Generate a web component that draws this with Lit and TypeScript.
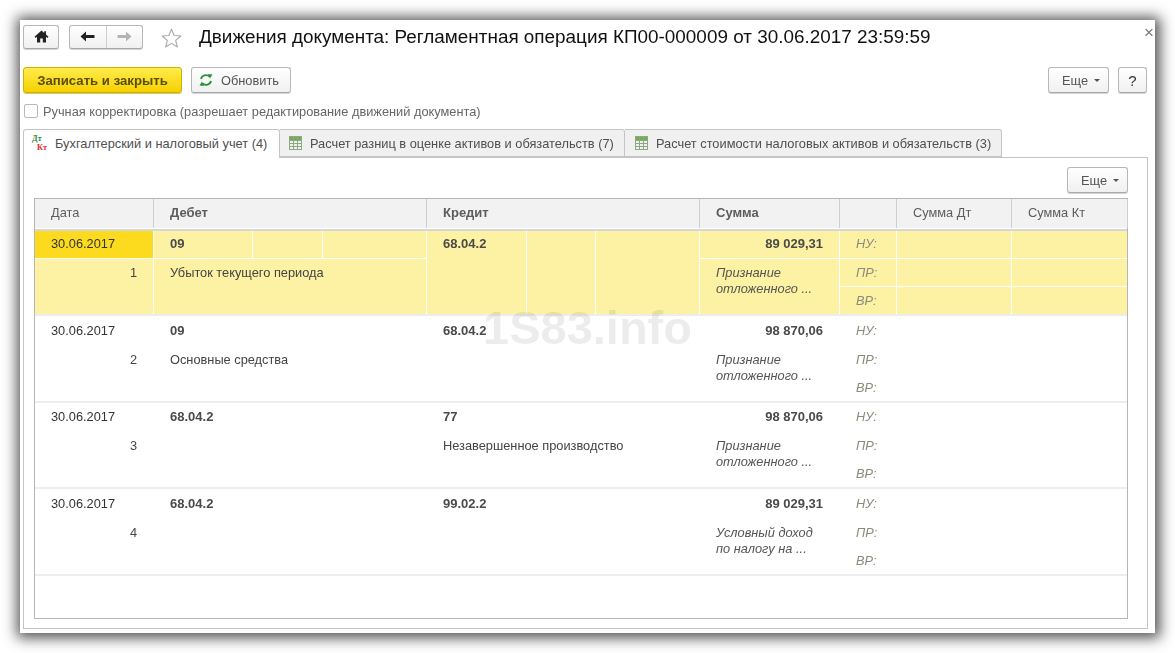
import { LitElement, html, css, svg } from "lit";
import { customElement } from "lit/decorators.js";

interface Row { date: string; n: string; deb: string; debName: string; kr: string; krName: string; sum: string; note: string[]; sel?: boolean; }

const rows: Row[] = [
  { date: "30.06.2017", n: "1", deb: "09", debName: "Убыток текущего периода", kr: "68.04.2", krName: "", sum: "89 029,31", note: ["Признание", "отложенного ..."], sel: true },
  { date: "30.06.2017", n: "2", deb: "09", debName: "Основные средства", kr: "68.04.2", krName: "", sum: "98 870,06", note: ["Признание", "отложенного ..."] },
  { date: "30.06.2017", n: "3", deb: "68.04.2", debName: "", kr: "77", krName: "Незавершенное производство", sum: "98 870,06", note: ["Признание", "отложенного ..."] },
  { date: "30.06.2017", n: "4", deb: "68.04.2", debName: "", kr: "99.02.2", krName: "", sum: "89 029,31", note: ["Условный доход", "по налогу на ..."] },
];

const tableIcon = html`<svg class="ticon" width="13" height="14" viewBox="0 0 13 14">
  <rect x="0.5" y="0.5" width="12" height="13" fill="#eef3e6" stroke="#8fa58c"/>
  <rect x="1" y="1" width="11" height="3" fill="#6fb04a"/>
  ${[4.5, 7.5, 10.5].map((y) => svg`<path d="M1 ${y}H12" stroke="#8fa58c" stroke-width="1"/>`)}
  ${[4.5, 8.5].map((x) => svg`<path d="M${x} 1V13" stroke="#8fa58c" stroke-width="1"/>`)}
</svg>`;

@customElement("app-root")
export class AppRoot extends LitElement {
  static styles = css`
    :host { display: block; width: 1175px; height: 653px; background: #fff; overflow: hidden; font-family: "Liberation Sans", Arial, sans-serif; font-size: 12.8px; color: #444; }
    .stage { padding: 20px; height: 653px; box-sizing: border-box; }
    .win { position: relative; background: #fff; height: 613px; box-sizing: border-box; padding: 4px 7px 4px 3px; box-shadow: 1px 1px 13px 4px rgba(0,0,0,.68); display: flex; flex-direction: column; filter: blur(.3px); }
    .head { display: flex; align-items: center; height: 25px; }
    .btn { box-sizing: border-box; display: flex; align-items: center; justify-content: center; border: 1px solid #b7b7b7; border-bottom-color: #a8a8a8; border-radius: 3px; background: linear-gradient(#fff, #f0f0f0); box-shadow: 0 1px 0 #d4d4d4; }
    .home { width: 36px; height: 24px; }
    .nav { width: 74px; height: 24px; margin-left: 10px; padding: 0; }
    .nav span { flex: 1; height: 100%; display: flex; align-items: center; justify-content: center; }
    .nav span + span { border-left: 1px solid #cfcfcf; }
    .star { margin-left: 18px; display: block; margin-top: 2px; }
    h1 { margin: 0 0 0 17px; padding-top: 1px; font-size: 18.9px; font-weight: 400; color: #111; white-space: nowrap; }
    .close { position: absolute; top: 4px; right: 1px; font-size: 17px; color: #777; line-height: 18px; }
    .bar { display: flex; align-items: center; height: 26px; margin-top: 18px; gap: 9px; padding-right: 1px; }
    .bar .btn { height: 26px; color: #555; }
    .save { width: 159px; background: linear-gradient(#ffec4c, #f6d000); border-color: #cdb000; color: #5a4e00 !important; font-weight: 700; font-size: 13.2px; box-shadow: 0 1px 0 #d9c96a; }
    .refresh { width: 100px; gap: 8px; justify-content: flex-start !important; padding-left: 7px; }
    .spacer { flex: 1; }
    .more { width: 61px; gap: 6px; justify-content: flex-start !important; padding-left: 13px; }
    .caret { width: 0; height: 0; border: 3px solid transparent; border-top-color: #555; border-bottom: 0; margin-top: 1px; }
    .q { width: 29px; font-size: 15px; color: #333 !important; }
    .check { display: flex; align-items: center; height: 16px; margin-top: 10px; gap: 5px; color: #666; }
    .check span + span { padding-top: 1px; }
    .box { width: 14px; height: 14px; box-sizing: border-box; border: 1px solid #b9b9b9; border-radius: 2px; margin-left: 1px; background: #fff; }
    .tabs { display: flex; margin-top: 10px; height: 29px; position: relative; z-index: 1; }
    .tab { box-sizing: border-box; height: 28px; display: flex; align-items: center; border: 1px solid #c4c4c4; border-left: 0; border-bottom: 1px solid #c4c4c4; border-radius: 0 3px 0 0; background: #f0f0f0; padding-left: 9px; gap: 8px; white-space: nowrap; color: #4f4f4f; }
    .tab.on { height: 29px; width: 257px; background: #fff; border-left: 1px solid #c4c4c4; border-bottom: 0; border-radius: 3px 3px 0 0; padding: 0 0 1px 8px; gap: 7px; }
    .t2 { width: 345px; }
    .t3 { width: 377px; padding-left: 10px !important; }
    .ticon { flex: none; }
    .dk { display: flex; flex-direction: column; width: 16px; font-family: "Liberation Serif", serif; font-weight: 700; font-size: 8px; line-height: 8.5px; letter-spacing: .3px; }
    .dk i { font-style: normal; color: #2f8a3a; }
    .dk b { color: #e5262a; margin-left: 5px; }
    .panel { flex: 1; margin-top: -1px; border: 1px solid #c4c4c4; padding: 9px 19px 9px 10px; display: flex; flex-direction: column; min-height: 0; }
    .panel .tools { display: flex; justify-content: flex-end; height: 26px; margin-bottom: 5px; }
    .panel .btn { height: 26px; color: #555; }
    .table { position: relative; flex: 1; border: 1px solid #b5b5b5; min-height: 0; }
    .grid { display: grid; grid-template-columns: 118px 98px 69px 103px 99px 68px 103px 139px 56px 114px 115px; column-gap: 1px; }
    .hdr { background: #fff; border-bottom: 2px solid #d6d6d6; height: 32px; box-sizing: border-box; grid-template-rows: 29px; }
    .hdr div { background: #f2f2f2; height: 29px; padding-left: 16px; line-height: 28px; color: #5c5c5c; box-sizing: border-box; box-shadow: 1px 0 0 #cfcfcf; }
    .hdr .b { font-weight: 700; font-size: 13px; }
    .row { grid-template-rows: 27px 27px 27px; row-gap: 1px; border-bottom: 2px solid #ededed; height: 85.17px; margin-bottom: 1.5px; box-sizing: border-box; }
    .c { padding: 6px 0 0 16px; line-height: 14px; white-space: nowrap; box-sizing: border-box; min-width: 0; }
    .sel .c { background: #fdf1a3; }
    .sel .cur { background: #fcdb1e; }
    .date { grid-column: 1; grid-row: 1; color: #333; }
    .num { grid-column: 1; grid-row: 2 / 4; text-align: right; padding: 7px 16px 0 0; }
    .deb { grid-column: 2; grid-row: 1; font-weight: 700; font-size: 13px; color: #4a4a4a; }
    .d2 { grid-column: 3; grid-row: 1; }
    .d3 { grid-column: 4; grid-row: 1; }
    .dn { grid-column: 2 / 5; grid-row: 2 / 4; padding-top: 7px; }
    .kr { grid-column: 5; grid-row: 1 / 4; font-weight: 700; font-size: 13px; color: #4a4a4a; }
    .k2 { grid-column: 6; grid-row: 1 / 4; }
    .k3 { grid-column: 7; grid-row: 1 / 4; }
    .plain .kr { grid-row: 1; grid-column: 5 / 8; }
    .kn { grid-column: 5 / 8; grid-row: 2 / 4; padding-top: 7px; }
    .sum { grid-column: 8; grid-row: 1; font-weight: 700; font-size: 13px; text-align: right; padding: 6px 16px 0 0; color: #4a4a4a; }
    .note { grid-column: 8; grid-row: 2 / 4; font-style: italic; line-height: 16px; padding-top: 6px; color: #555; }
    .note span { display: block; }
    .lab { grid-column: 9; font-style: italic; color: #8b8b7d; }
    .l1, .l2 { padding-top: 7px; }
    .dt { grid-column: 10; }
    .kt { grid-column: 11; }
    .mark { position: absolute; left: 448px; top: 102px; font-size: 47px; line-height: 54px; font-weight: 700; color: rgba(0,0,0,.075); pointer-events: none; white-space: nowrap; }
  `;

  private more() {
    return html`<div class="btn more"><span>Еще</span><span class="caret"></span></div>`;
  }

  private renderRow(r: Row) {
    const labs = ["НУ:", "ПР:", "ВР:"];
    return html`<div class="grid row ${r.sel ? "sel" : "plain"}">
      <div class="c date ${r.sel ? "cur" : ""}">${r.date}</div>
      <div class="c num">${r.n}</div>
      <div class="c deb">${r.deb}</div>
      <div class="c d2"></div>
      <div class="c d3"></div>
      <div class="c dn">${r.debName}</div>
      <div class="c kr">${r.kr}</div>
      ${r.sel ? html`<div class="c k2"></div><div class="c k3"></div>` : html`<div class="c kn">${r.krName}</div>`}
      <div class="c sum">${r.sum}</div>
      <div class="c note">${r.note.map((l) => html`<span>${l}</span>`)}</div>
      ${labs.map((l, i) => html`
        <div class="c lab l${i}" style="grid-row:${i + 1}">${l}</div>
        <div class="c dt" style="grid-row:${i + 1}"></div>
        <div class="c kt" style="grid-row:${i + 1}"></div>`)}
    </div>`;
  }

  render() {
    return html`<div class="stage"><div class="win">
      <div class="head">
        <div class="btn home">
          <svg width="15" height="13" viewBox="0 0 15 13"><path d="M7.5 0.5 0.5 6.8 1.6 8 3 6.8V12.5H6.2V8.6H8.8V12.5H12V6.8L13.4 8 14.5 6.8 12 4.5V1.2H10.2V2.9Z" fill="#222"/></svg>
        </div>
        <div class="btn nav">
          <span><svg width="15" height="11" viewBox="0 0 15 11"><path d="M6 0.5 0.5 5.5 6 10.5V7H14.5V4H6Z" fill="#222"/></svg></span>
          <span><svg width="15" height="11" viewBox="0 0 15 11"><path d="M9 0.5 14.5 5.5 9 10.5V7H0.5V4H9Z" fill="#b4b4b4"/></svg></span>
        </div>
        <svg class="star" width="21" height="20" viewBox="0 0 24 23"><path d="M12 1.5 15 8.6 22.8 9.2 16.8 14.2 18.7 21.8 12 17.7 5.3 21.8 7.2 14.2 1.2 9.2 9 8.6Z" fill="#fff" stroke="#a9a9a9" stroke-width="1.3" stroke-linejoin="round"/></svg>
        <h1>Движения документа: Регламентная операция КП00-000009 от 30.06.2017 23:59:59</h1>
      </div>
      <div class="close">×</div>
      <div class="bar">
        <div class="btn save">Записать и закрыть</div>
        <div class="btn refresh">
          <svg width="14" height="12" viewBox="0 0 14 12"><path d="M2 5A5 4.5 0 0 1 10.5 2.6" fill="none" stroke="#2f8f3a" stroke-width="1.8"/><path d="M9 0 13.5 0.6 11 4.4Z" fill="#2f8f3a"/><path d="M12 7A5 4.5 0 0 1 3.5 9.4" fill="none" stroke="#2f8f3a" stroke-width="1.8"/><path d="M5 12 0.5 11.4 3 7.6Z" fill="#2f8f3a"/></svg>
          <span>Обновить</span>
        </div>
        <div class="spacer"></div>
        ${this.more()}
        <div class="btn q">?</div>
      </div>
      <div class="check"><span class="box"></span><span>Ручная корректировка (разрешает редактирование движений документа)</span></div>
      <div class="tabs">
        <div class="tab on"><span class="dk"><i>Дт</i><b>Кт</b></span><span>Бухгалтерский и налоговый учет (4)</span></div>
        <div class="tab t2">${tableIcon}<span>Расчет разниц в оценке активов и обязательств (7)</span></div>
        <div class="tab t3">${tableIcon}<span>Расчет стоимости налоговых активов и обязательств (3)</span></div>
      </div>
      <div class="panel">
        <div class="tools">${this.more()}</div>
        <div class="table">
          <div class="grid hdr">
            <div>Дата</div>
            <div class="b" style="grid-column:2 / 5">Дебет</div>
            <div class="b" style="grid-column:5 / 8">Кредит</div>
            <div class="b">Сумма</div>
            <div></div>
            <div>Сумма Дт</div>
            <div>Сумма Кт</div>
          </div>
          ${rows.map((r) => this.renderRow(r))}
          <div class="mark">1S83.info</div>
        </div>
      </div>
    </div></div>`;
  }
}
